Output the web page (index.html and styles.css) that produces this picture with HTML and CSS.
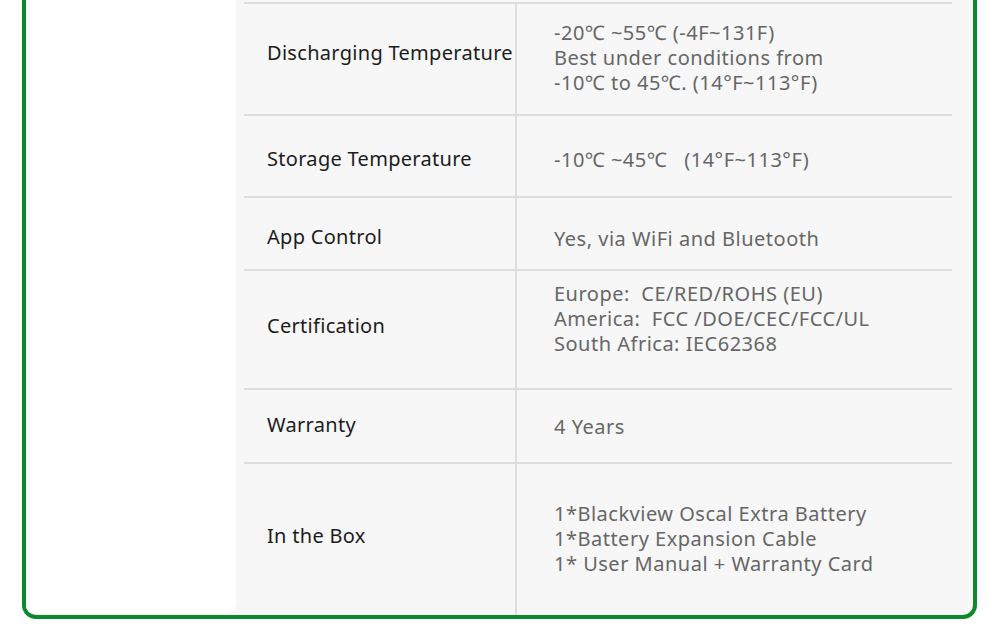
FILE: index.html
```html
<!DOCTYPE html>
<html>
<head>
<meta charset="utf-8">
<link rel="stylesheet" href="styles.css">
</head>
<body>
<div class="card">
  <div class="side"></div>
  <div class="table">
    <div class="row r1">
      <div class="label">Discharging Temperature</div>
      <div class="value">-20℃ ~55℃ (-4F~131F)<br>Best under conditions from<br>-10℃ to 45℃. (14°F~113°F)</div>
    </div>
    <div class="row r2">
      <div class="label">Storage Temperature</div>
      <div class="value">-10℃ ~45℃ &nbsp;&nbsp;(14°F~113°F)</div>
    </div>
    <div class="row r3">
      <div class="label">App Control</div>
      <div class="value">Yes, via WiFi and Bluetooth</div>
    </div>
    <div class="row r4">
      <div class="label">Certification</div>
      <div class="value">Europe: &nbsp;CE/RED/ROHS (EU)<br>America: &nbsp;FCC /DOE/CEC/FCC/UL<br>South Africa: IEC62368</div>
    </div>
    <div class="row r5">
      <div class="label">Warranty</div>
      <div class="value">4 Years</div>
    </div>
    <div class="row r6">
      <div class="label">In the Box</div>
      <div class="value">1*Blackview Oscal Extra Battery<br>1*Battery Expansion Cable<br>1* User Manual + Warranty Card</div>
    </div>
  </div>
</div>
</body>
</html>
```

FILE: styles.css
```css
html, body {
  margin: 0;
  padding: 0;
  background: #ffffff;
  height: 637px;
  overflow: hidden;
}
body {
  font-family: "Noto Sans", "Open Sans", sans-serif;
  font-size: 20px;
  line-height: 25px;
}
.card {
  margin: -40px 23px 0 22px;
  border: 4px solid #0b8a2c;
  border-radius: 14px;
  background: #f7f7f7;
  display: grid;
  grid-template-columns: 210px 1fr;
  overflow: hidden;
}
.side {
  background: #ffffff;
  border-bottom-right-radius: 10px;
  margin-bottom: 2px;
}
.table {
  padding: 38px 21px 0 8px;
  display: flex;
  flex-direction: column;
}
.row {
  display: grid;
  grid-template-columns: 271px 1fr;
  border-top: 2px solid #dedede;
  box-sizing: border-box;
}
.label {
  color: #1c1c1c;
  padding-left: 23px;
  white-space: nowrap;
  letter-spacing: 0.3px;
}
.value {
  color: #666666;
  border-left: 2px solid #dedede;
  padding-left: 37px;
  white-space: nowrap;
  letter-spacing: 0.5px;
}
.r1 { height: 112px; }
.r1 .label { padding-top: 36px; }
.r1 .value { padding-top: 16px; }
.r2 { height: 82px; }
.r2 .label { padding-top: 30px; }
.r2 .value { padding-top: 31px; }
.r3 { height: 73px; }
.r3 .label { padding-top: 26px; }
.r3 .value { padding-top: 28px; }
.r4 { height: 119px; }
.r4 .label { padding-top: 42px; }
.r4 .value { padding-top: 10px; }
.r5 { height: 74px; }
.r5 .label { padding-top: 22px; }
.r5 .value { padding-top: 24px; }
.r6 { height: 153px; }
.r6 .label { padding-top: 59px; }
.r6 .value { padding-top: 37px; }
```
